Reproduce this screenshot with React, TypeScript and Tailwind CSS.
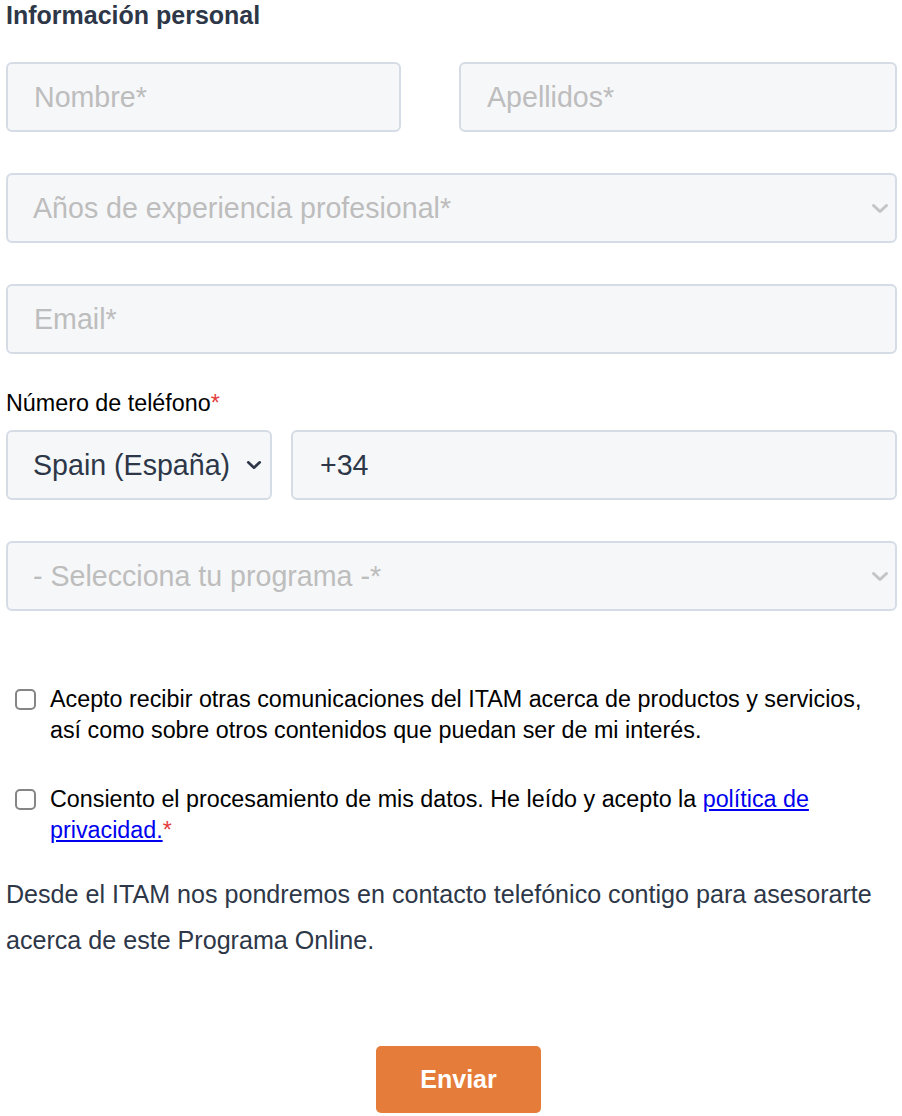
import React from 'react';

const font = { fontFamily: '"Liberation Sans", Arial, sans-serif' };

const Chevron = ({ className }: { className: string }) => (
  <svg viewBox="0 0 18 11" className={className} fill="none" stroke="currentColor" strokeWidth="3" strokeLinecap="round" strokeLinejoin="round">
    <path d="M2.5 2.5l6.5 6 6.5-6" />
  </svg>
);

const TextField = ({ placeholder, className = '' }: { placeholder: string; className?: string }) => (
  <input
    type="text"
    placeholder={placeholder}
    className={`h-[70px] rounded-[6px] border-2 border-[#d5dce6] bg-[#f6f7f9] pl-[26px] text-[28.6px] text-[#2d3748] outline-none placeholder:text-[#bdbdbd] ${className}`}
  />
);

const SelectField = ({ label, muted = true, className = '' }: { label: string; muted?: boolean; className?: string }) => (
  <div
    className={`flex h-[70px] items-center justify-between rounded-[6px] border-2 border-[#d5dce6] bg-[#f6f7f9] pl-[25px] text-[28.6px] ${muted ? 'text-[#bdbdbd]' : 'text-[#2d3748]'} ${className}`}
  >
    <span>{label}</span>
    {muted ? (
      <Chevron className="h-[11px] w-[18px] text-[#c4c4c4]" />
    ) : (
      <Chevron className="h-[10px] w-[16px] text-[#2d3748]" />
    )}
  </div>
);

const Check = ({ children }: { children: React.ReactNode }) => (
  <label className="flex items-start pl-[9px] text-[23.3px] leading-[31px] text-black">
    <span className="mt-[5px] h-[21px] w-[21px] shrink-0 rounded-[5px] border-2 border-[#858585] bg-white" />
    <span className="ml-[14px]">{children}</span>
  </label>
);

export default function App() {
  return (
    <div style={font} className="w-[902px] bg-white pl-[6px] pr-[5px] pb-[4px]">
      <h2 className="text-[25px] font-bold leading-[30px] text-[#2d3748]">Información personal</h2>

      <div className="mt-[32px] flex flex-col gap-[41px]">
        <div className="flex gap-[58px]">
          <TextField placeholder="Nombre*" className="w-[395px]" />
          <TextField placeholder="Apellidos*" className="min-w-0 flex-1" />
        </div>
        <SelectField label="Años de experiencia profesional*" className="pr-[6px]" />
        <TextField placeholder="Email*" className="w-full" />
      </div>

      <p className="mt-[33px] text-[23.3px] leading-[32px] text-black">
        Número de teléfono<span className="text-[#e53e3e]">*</span>
      </p>
      <div className="mt-[11px] flex gap-[19px]">
        <SelectField label="Spain (España)" muted={false} className="w-[266px] pr-[8px]" />
        <input
          type="text"
          defaultValue="+34"
          className="h-[70px] min-w-0 flex-1 rounded-[6px] border-2 border-[#d5dce6] bg-[#f6f7f9] pl-[27px] text-[28.6px] text-[#2d3748] outline-none"
        />
      </div>

      <SelectField label="- Selecciona tu programa -*" className="mt-[41px] pr-[6px]" />

      <div className="mt-[73px] flex flex-col gap-[38px]">
        <Check>
          Acepto recibir otras comunicaciones del ITAM acerca de productos y servicios, así como sobre otros contenidos que puedan ser de mi interés.
        </Check>
        <Check>
          Consiento el procesamiento de mis datos. He leído y acepto la{' '}
          <a href="#" className="text-[#0000ee] underline">política de privacidad.</a>
          <span className="text-[#e53e3e]">*</span>
        </Check>
      </div>

      <p className="mt-[25px] text-[25.1px] leading-[46px] text-[#2d3748]">
        Desde el ITAM nos pondremos en contacto telefónico contigo para asesorarte acerca de este Programa Online.
      </p>

      <div className="mt-[83px] flex justify-center pl-[14px]">
        <button className="h-[67px] w-[165px] rounded-[5px] bg-[#e57c3a] text-[25px] font-bold text-white">Enviar</button>
      </div>
    </div>
  );
}
